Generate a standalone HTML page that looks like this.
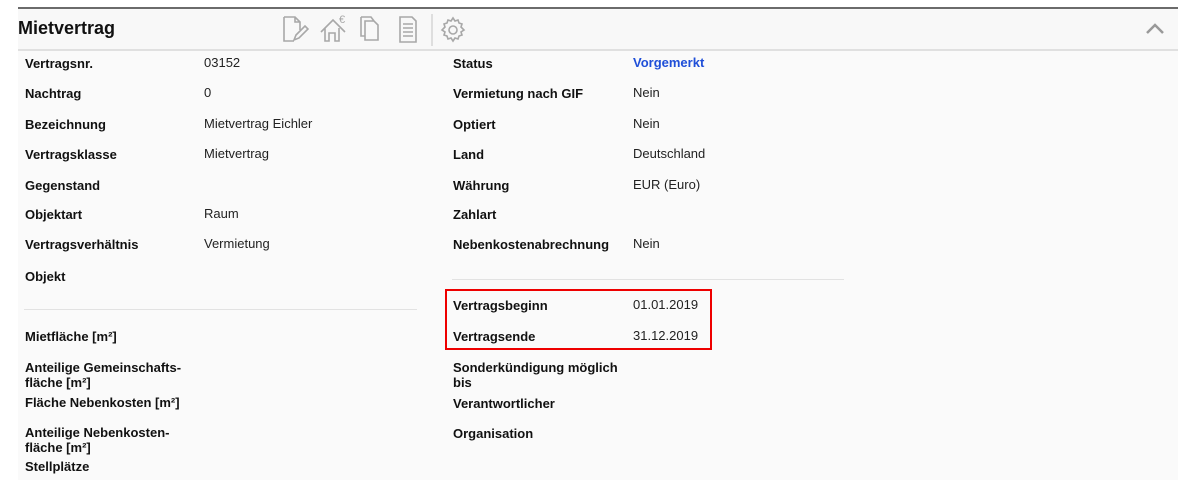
<!DOCTYPE html>
<html><head><meta charset="utf-8"><style>
body{margin:0;width:1178px;height:480px;background:#fff;font-family:"Liberation Sans",Arial,sans-serif;overflow:hidden;position:relative}
#p{position:absolute;left:18px;top:7px;right:0;bottom:0;background:#fafafa;border-top:2px solid #6b6b6b}
#h{position:absolute;left:18px;top:9px;right:0;height:40px;border-bottom:2px solid #e0e0e0;background:#f8f8f8}
.t{position:absolute;left:18px;top:18px;font-size:18px;font-weight:bold;color:#111}
.l,.v{position:absolute;font-size:13px;line-height:15px;color:#111;white-space:nowrap}
.l{font-weight:bold}
.v{color:#222}
.hr{position:absolute;height:1px;background:#e2e2e2}
svg{position:absolute}
</style></head><body>
<div id="p"></div><div id="h"></div>
<div class="t">Mietvertrag</div>
<svg width="200" height="36" style="left:278px;top:12px" fill="none" stroke="#a8a8a8" stroke-width="1.6">
<path d="M6 5h11l5 5v8M6 5v24h10M17 5v5h5"/><path d="M16 28l2-5 9-9 3 3-9 9z"/>
<path d="M43 20l12-12 12 12M47 16v13h4v-8h6v8h4V16"/><text x="61" y="11" font-size="11" fill="#a8a8a8" stroke="none" font-family="Liberation Sans">€</text>
<path d="M87 9h9l4 4v15H87zM83 5h10l3 4M83 5v19h4"/>
<path d="M122 5h12l4 4v21h-16zM125 12h10M125 16h10M125 20h10M125 24h10"/>
<line x1="154" y1="2" x2="154" y2="34" stroke="#d8d8d8"/>
<circle cx="175" cy="18" r="4"/><path d="M175 6l2 3 3-1 1 3 3 1-1 3 3 3-3 2 1 3-3 1-1 3-3-1-2 3-2-3-3 1-1-3-3-1 1-3-3-2 3-3-1-3 3-1 1-3 3 1z"/>
</svg>
<svg width="20" height="14" style="left:1145px;top:22px"><path d="M2 11l8-8 8 8" fill="none" stroke="#999" stroke-width="2.5"/></svg>

<div class="l" style="left:25px;top:56px">Vertragsnr.</div><div class="v" style="left:204px;top:55px">03152</div>
<div class="l" style="left:25px;top:86px">Nachtrag</div><div class="v" style="left:204px;top:85px">0</div>
<div class="l" style="left:25px;top:117px">Bezeichnung</div><div class="v" style="left:204px;top:116px">Mietvertrag Eichler</div>
<div class="l" style="left:25px;top:147px">Vertragsklasse</div><div class="v" style="left:204px;top:146px">Mietvertrag</div>
<div class="l" style="left:25px;top:178px">Gegenstand</div>
<div class="l" style="left:25px;top:207px">Objektart</div><div class="v" style="left:204px;top:206px">Raum</div>
<div class="l" style="left:25px;top:237px">Vertragsverhältnis</div><div class="v" style="left:204px;top:236px">Vermietung</div>
<div class="l" style="left:25px;top:269px">Objekt</div>
<div class="hr" style="left:24px;top:309px;width:393px"></div>
<div class="l" style="left:25px;top:329px">Mietfläche [m²]</div>
<div class="l" style="left:25px;top:360px">Anteilige Gemeinschafts-<br>fläche [m²]</div>
<div class="l" style="left:25px;top:395px">Fläche Nebenkosten [m²]</div>
<div class="l" style="left:25px;top:425px">Anteilige Nebenkosten-<br>fläche [m²]</div>
<div class="l" style="left:25px;top:459px">Stellplätze</div>

<div class="l" style="left:453px;top:56px">Status</div><div class="v" style="left:633px;top:55px;color:#1f4fd8;font-weight:bold">Vorgemerkt</div>
<div class="l" style="left:453px;top:86px">Vermietung nach GIF</div><div class="v" style="left:633px;top:85px">Nein</div>
<div class="l" style="left:453px;top:117px">Optiert</div><div class="v" style="left:633px;top:116px">Nein</div>
<div class="l" style="left:453px;top:147px">Land</div><div class="v" style="left:633px;top:146px">Deutschland</div>
<div class="l" style="left:453px;top:178px">Währung</div><div class="v" style="left:633px;top:177px">EUR (Euro)</div>
<div class="l" style="left:453px;top:207px">Zahlart</div>
<div class="l" style="left:453px;top:237px">Nebenkostenabrechnung</div><div class="v" style="left:633px;top:236px">Nein</div>
<div class="hr" style="left:452px;top:279px;width:392px"></div>
<div style="position:absolute;left:445px;top:289px;width:263px;height:57px;border:2px solid #e00"></div>
<div class="l" style="left:453px;top:298px">Vertragsbeginn</div><div class="v" style="left:633px;top:297px">01.01.2019</div>
<div class="l" style="left:453px;top:329px">Vertragsende</div><div class="v" style="left:633px;top:328px">31.12.2019</div>
<div class="l" style="left:453px;top:360px">Sonderkündigung möglich<br>bis</div>
<div class="l" style="left:453px;top:396px">Verantwortlicher</div>
<div class="l" style="left:453px;top:426px">Organisation</div>
</body></html>
